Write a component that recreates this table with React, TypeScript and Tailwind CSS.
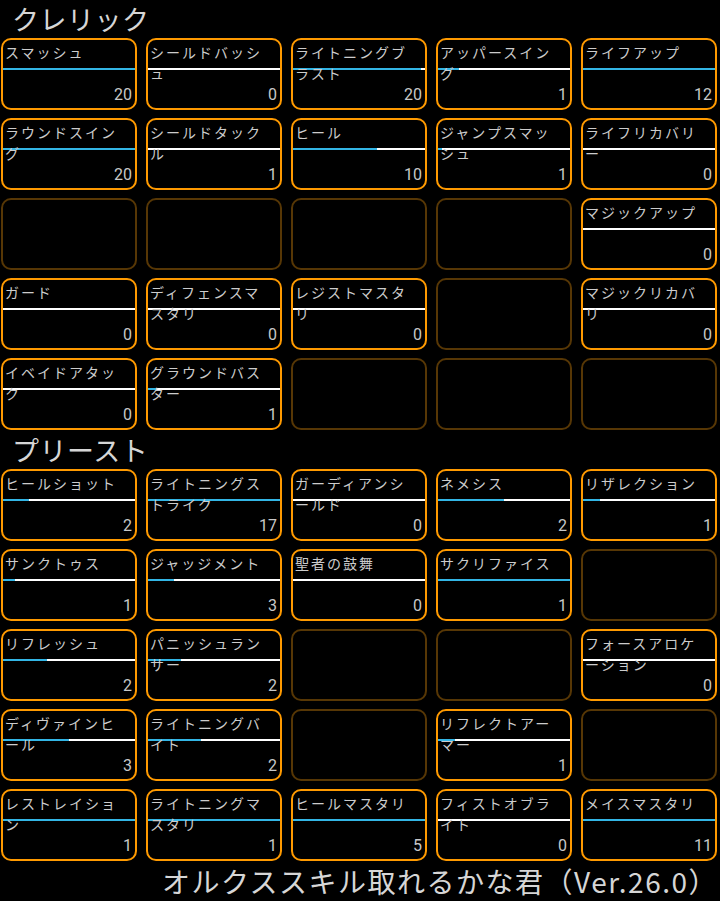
import * as React from "react";

type Skill = { name: string; level: number; pct: number } | null;

const cleric: Skill[] = [
  { name: "スマッシュ", level: 20, pct: 100 },
  { name: "シールドバッシュ", level: 0, pct: 0 },
  { name: "ライトニングブラスト", level: 20, pct: 97 },
  { name: "アッパースイング", level: 1, pct: 16 },
  { name: "ライフアップ", level: 12, pct: 100 },

  { name: "ラウンドスイング", level: 20, pct: 100 },
  { name: "シールドタックル", level: 1, pct: 0 },
  { name: "ヒール", level: 10, pct: 64 },
  { name: "ジャンプスマッシュ", level: 1, pct: 3 },
  { name: "ライフリカバリー", level: 0, pct: 0 },

  null,
  null,
  null,
  null,
  { name: "マジックアップ", level: 0, pct: 0 },

  { name: "ガード", level: 0, pct: 0 },
  { name: "ディフェンスマスタリ", level: 0, pct: 0 },
  { name: "レジストマスタリ", level: 0, pct: 0 },
  null,
  { name: "マジックリカバリ", level: 0, pct: 0 },

  { name: "イベイドアタック", level: 0, pct: 0 },
  { name: "グラウンドバスター", level: 1, pct: 6 },
  null,
  null,
  null,
];

const priest: Skill[] = [
  { name: "ヒールショット", level: 2, pct: 20 },
  { name: "ライトニングストライク", level: 17, pct: 100 },
  { name: "ガーディアンシールド", level: 0, pct: 0 },
  { name: "ネメシス", level: 2, pct: 50 },
  { name: "リザレクション", level: 1, pct: 13 },

  { name: "サンクトゥス", level: 1, pct: 9 },
  { name: "ジャッジメント", level: 3, pct: 20 },
  { name: "聖者の鼓舞", level: 0, pct: 0 },
  { name: "サクリファイス", level: 1, pct: 100 },
  null,

  { name: "リフレッシュ", level: 2, pct: 33 },
  { name: "パニッシュランサー", level: 2, pct: 25 },
  null,
  null,
  { name: "フォースアロケーション", level: 0, pct: 0 },

  { name: "ディヴァインヒール", level: 3, pct: 50 },
  { name: "ライトニングバイト", level: 2, pct: 40 },
  null,
  { name: "リフレクトアーマー", level: 1, pct: 13 },
  null,

  { name: "レストレイション", level: 1, pct: 100 },
  { name: "ライトニングマスタリ", level: 1, pct: 100 },
  { name: "ヒールマスタリ", level: 5, pct: 100 },
  { name: "フィストオブライト", level: 0, pct: 0 },
  { name: "メイスマスタリ", level: 11, pct: 100 },
];

function SkillCard({ skill }: { skill: Skill }) {
  if (!skill) {
    return <div className="h-[72px] rounded-[10px] border-2 border-[#573705]" />;
  }
  return (
    <div className="h-[72px] rounded-[10px] border-2 border-[#ff9a00] flex flex-col">
      {/* label, may spill onto a second line across the bar */}
      <div className="h-[28px] pl-[2px] pr-[12px] pt-[2px] text-[14px] leading-[21px] tracking-[2px] text-[#cccccc] [line-break:anywhere] relative z-10">
        {skill.name}
      </div>
      <div className="h-[2px] bg-white flex">
        <div className="h-full bg-[#33b5e5]" style={{ width: `${skill.pct}%` }} />
      </div>
      <div className="flex-1 flex items-end justify-end pr-[3px] pb-[5px] font-['Roboto'] text-[16px] leading-[16px] text-[#c8c8c8]">
        {skill.level}
      </div>
    </div>
  );
}

function Section({ title, skills }: { title: string; skills: Skill[] }) {
  return (
    <>
      <div className="h-[38px] pl-[12px] text-[27px] leading-[38px] tracking-[0.5px] text-[#d6d6d6]">
        {title}
      </div>
      <div className="grid grid-cols-5 gap-x-[9px] gap-y-[8px] pl-[1px] pr-[3px]">
        {skills.map((s, i) => (
          <SkillCard key={i} skill={s} />
        ))}
      </div>
    </>
  );
}

export default function App() {
  return (
    <div className="w-[720px] h-[901px] bg-black overflow-hidden font-['Noto_Sans_CJK_JP','Noto_Sans',sans-serif]">
      <Section title="クレリック" skills={cleric} />
      <div className="h-[1px]" />
      <Section title="プリースト" skills={priest} />
      <div className="h-[40px] pr-[2px] text-right text-[28px] leading-[40px] tracking-[1.5px] text-[#d6d6d6] whitespace-nowrap">
        オルクススキル取れるかな君（Ver.26.0）
      </div>
    </div>
  );
}
